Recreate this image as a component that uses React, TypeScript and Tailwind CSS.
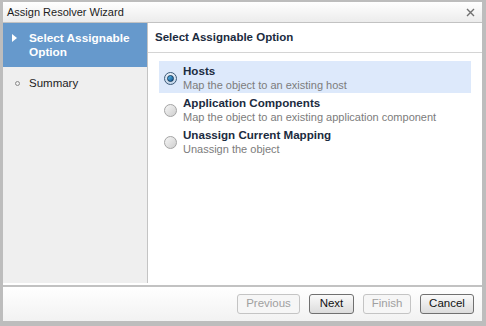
import React from 'react';

const options = [
  { title: 'Hosts', desc: 'Map the object to an existing host', selected: true },
  { title: 'Application Components', desc: 'Map the object to an existing application component', selected: false },
  { title: 'Unassign Current Mapping', desc: 'Unassign the object', selected: false },
];

function Radio({ checked }: { checked: boolean }) {
  if (checked) {
    return (
      <span className="flex h-[13px] w-[13px] shrink-0 items-center justify-center rounded-full border border-[#3c5a78] bg-gradient-to-b from-[#e8f0f8] to-[#c4d6ea]">
        <span className="block h-[7px] w-[7px] rounded-full border border-[#123a5e] bg-gradient-to-br from-[#5ec3f2] to-[#0f4f8c]" />
      </span>
    );
  }
  return (
    <span className="block h-[13px] w-[13px] shrink-0 rounded-full border border-[#a4a4a4] bg-gradient-to-br from-[#f6f6f6] to-[#cfcfcf]" />
  );
}

function Button({ label, width, disabled }: { label: string; width: string; disabled?: boolean }) {
  return (
    <button
      className={
        disabled
          ? `${width} h-[20px] rounded-[3px] border border-[#c4c4c4] bg-[#f6f6f6] text-[11.5px] text-[#a0a0a0]`
          : `${width} h-[20px] rounded-[3px] border border-[#707070] bg-gradient-to-b from-[#fafafa] to-[#dcdcdc] text-[11.5px] text-[#111]`
      }
    >
      {label}
    </button>
  );
}

export default function App() {
  return (
    <div className="h-[326px] w-[486px] bg-[#bdbdbd] pb-[5px] pl-[3px] pr-[4px] pt-[2px] font-['Liberation_Sans',Arial,sans-serif]">
      <div className="flex h-full flex-col bg-white">
        {/* Title bar */}
        <div className="flex h-[21px] items-center justify-between border-b border-[#c2c2c2] bg-gradient-to-b from-white to-[#ececec] pl-[4px] pr-[7px]">
          <span className="text-[11px] text-[#1c1c1c]">Assign Resolver Wizard</span>
          <svg width="9" height="9" viewBox="0 0 9 9" className="text-[#707070]">
            <path d="M1 1L8 8M8 1L1 8" stroke="currentColor" strokeWidth="1.4" />
          </svg>
        </div>

        {/* Body */}
        <div className="flex h-[260px]">
          {/* Sidebar */}
          <div className="w-[145px] shrink-0 border-r border-[#c4c4c4] bg-[#efefef]">
            <div className="flex h-[44px] bg-[#6699cc] pl-[9px] pt-[8px]">
              <svg width="6" height="8" viewBox="0 0 6 8" className="mt-[3px] shrink-0">
                <path d="M0 0L5 4L0 8Z" fill="white" />
              </svg>
              <span className="ml-[11px] text-[11.8px] font-bold leading-[14px] text-white">
                Select Assignable
                <br />
                Option
              </span>
            </div>
            <div className="flex items-center pl-[12px] pt-[8px]">
              <span className="block h-[5px] w-[5px] rounded-full border border-[#8a8a8a]" />
              <span className="ml-[9px] text-[11.5px] text-[#222]">Summary</span>
            </div>
          </div>

          {/* Content */}
          <div className="flex flex-1 flex-col">
            <div className="flex h-[30px] items-center border-b border-[#d4d4d4] pl-[7px]">
              <span className="text-[11.5px] font-bold text-[#1b2b40]">Select Assignable Option</span>
            </div>
            <div className="flex flex-col pl-[11px] pr-[11px] pt-[8px]">
              {options.map((o) => (
                <div
                  key={o.title}
                  className={`flex h-[32px] items-center pl-[5px] ${o.selected ? 'bg-[#dde9fb]' : ''}`}
                >
                  <div className="mt-[3px]">
                    <Radio checked={o.selected} />
                  </div>
                  <div className="ml-[6px] flex flex-col">
                    <span className="text-[11.6px] font-bold leading-[15px] text-[#1b2b40]">{o.title}</span>
                    <span className="text-[11px] leading-[14px] text-[#7c7c7c]">{o.desc}</span>
                  </div>
                </div>
              ))}
            </div>
          </div>
        </div>

        {/* Footer */}
        <div className="mt-[2px] flex flex-1 items-center justify-end gap-[9px] border-t-2 border-[#c2c2c2] bg-gradient-to-b from-white to-[#f2f2f2] pr-[8px]">
          <Button label="Previous" width="w-[63px]" disabled />
          <Button label="Next" width="w-[45px]" />
          <Button label="Finish" width="w-[48px]" disabled />
          <Button label="Cancel" width="w-[54px]" />
        </div>
      </div>
    </div>
  );
}
